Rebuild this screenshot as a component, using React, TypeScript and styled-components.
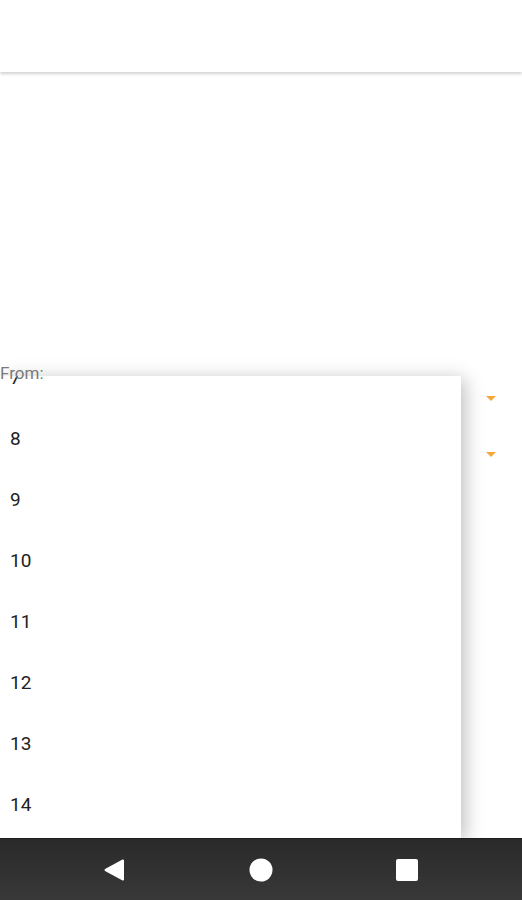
import { createGlobalStyle } from "styled-components";
import styled from "styled-components";

const GlobalStyle = createGlobalStyle`
  html, body {
    margin: 0;
    padding: 0;
    background: #fff;
    font-family: Roboto, "Noto Sans", "Liberation Sans", sans-serif;
  }
  * { box-sizing: border-box; }
`;

const Screen = styled.div`
  width: 522px;
  height: 900px;
  display: flex;
  flex-direction: column;
  overflow: hidden;
  position: relative;
`;

const AppBar = styled.header`
  height: 72px;
  flex: 0 0 72px;
  background: #fff;
  box-shadow: 0 2px 3px rgba(0, 0, 0, 0.18);
  position: relative;
  z-index: 1;
`;

const Content = styled.main`
  flex: 1;
  position: relative;
  padding-top: 291px;
`;

const Label = styled.div`
  font-size: 17px;
  color: #7a7a7a;
  line-height: 20px;
  height: 20px;
  position: relative;
  z-index: 3;
`;

const SpinnerRow = styled.div<{ $h: number }>`
  height: ${(p) => p.$h}px;
  display: flex;
  align-items: center;
  justify-content: flex-end;
  padding-right: 26px;
`;

const Caret = styled.span`
  width: 0;
  height: 0;
  border-left: 5px solid transparent;
  border-right: 5px solid transparent;
  border-top: 5px solid #f5a63e;
`;

const Popup = styled.div`
  position: absolute;
  left: 0;
  top: 304px;
  width: 461px;
  bottom: 0;
  background: #fff;
  overflow: hidden;
  box-shadow: 4px 3px 18px rgba(0, 0, 0, 0.26);
  z-index: 2;
`;

const List = styled.ul`
  list-style: none;
  margin: -29px 0 0 0;
  padding: 0;
`;

const Item = styled.li`
  height: 61px;
  display: flex;
  align-items: center;
  padding-left: 10px;
  font-size: 19px;
  color: #222;
`;

const NavBar = styled.nav`
  height: 62px;
  flex: 0 0 62px;
  background: linear-gradient(#2a2a2a, #383838);
  border-top: 1px solid #1e1e1e;
  display: flex;
  align-items: center;
  justify-content: space-around;
  padding: 0 42px;
  position: relative;
  z-index: 4;
`;

const NavButton = styled.div`
  width: 60px;
  display: flex;
  justify-content: center;
  align-items: center;
`;

const hours = [7, 8, 9, 10, 11, 12, 13, 14, 15];

function App() {
  return (
    <>
      <GlobalStyle />
      <Screen>
        <AppBar />
        <Content>
          <Label>From:</Label>
          <SpinnerRow $h={30}><Caret /></SpinnerRow>
          <SpinnerRow $h={82}><Caret /></SpinnerRow>
          <Popup>
            <List>
              {hours.map((h) => (
                <Item key={h}>{h}</Item>
              ))}
            </List>
          </Popup>
        </Content>
        <NavBar>
          <NavButton>
            <svg width="24" height="24" viewBox="0 0 24 24">
              <path d="M20 2.5 L20 21.5 L2.5 12 Z" fill="#fff" stroke="#fff" strokeWidth="2" strokeLinejoin="round" />
            </svg>
          </NavButton>
          <NavButton>
            <svg width="26" height="26" viewBox="0 0 26 26">
              <circle cx="13" cy="13" r="11.5" fill="#fff" />
            </svg>
          </NavButton>
          <NavButton>
            <svg width="24" height="24" viewBox="0 0 24 24">
              <rect x="1" y="1" width="22" height="22" rx="2" fill="#fff" />
            </svg>
          </NavButton>
        </NavBar>
      </Screen>
    </>
  );
}

export default App;
